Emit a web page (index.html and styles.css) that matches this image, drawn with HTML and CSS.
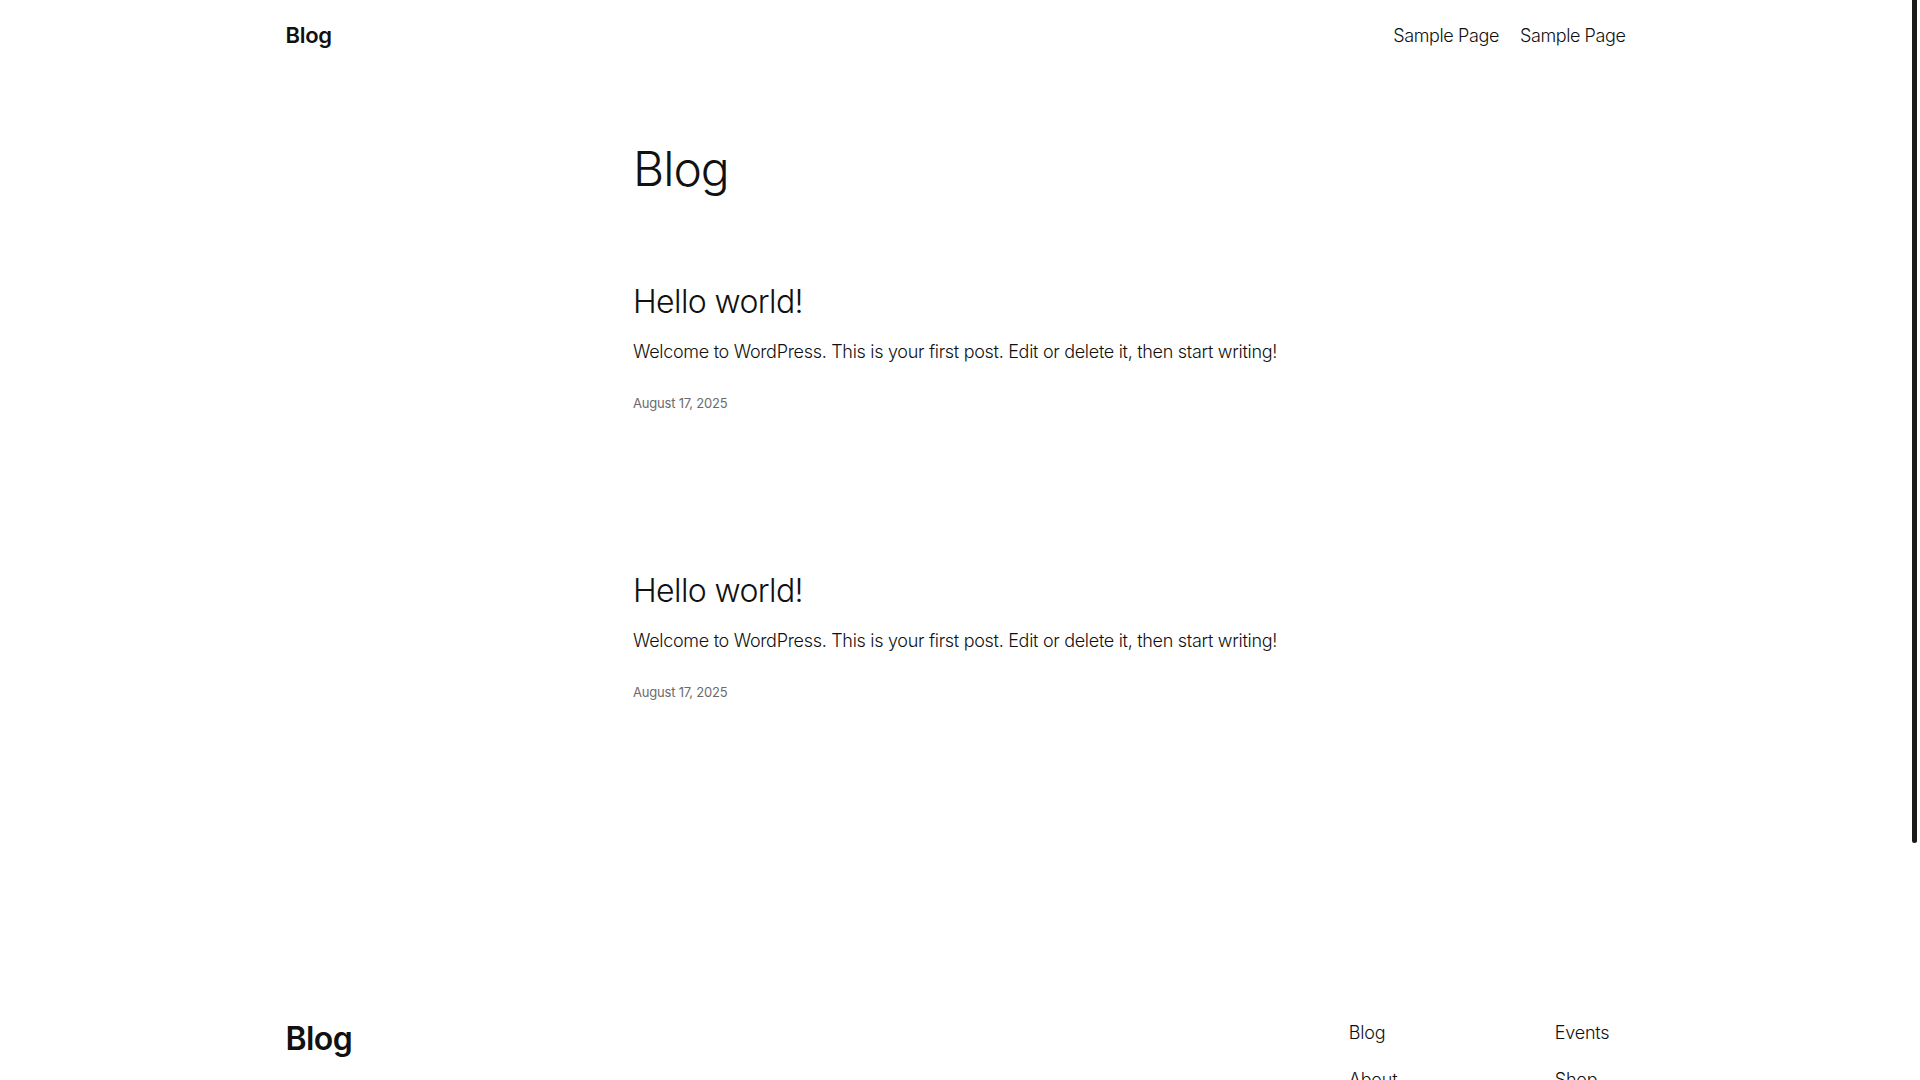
FILE: index.html
```html
<!DOCTYPE html>
<html lang="en">
<head>
<meta charset="utf-8">
<title>Blog</title>
<link rel="stylesheet" href="styles.css">
</head>
<body>
<div class="scroll-thumb"></div>
<header class="site-header">
  <div class="wrap header-row">
    <a class="site-title" href="#">Blog</a>
    <nav class="header-nav">
      <a href="#">Sample Page</a>
      <a href="#">Sample Page</a>
    </nav>
  </div>
</header>
<main class="site-main">
  <div class="content">
    <h1 class="page-title">Blog</h1>
    <ul class="post-list">
      <li class="post">
        <h2 class="post-title"><a href="#">Hello world!</a></h2>
        <p class="post-excerpt">Welcome to WordPress. This is your first post. Edit or delete it, then start writing!</p>
        <time class="post-date">August 17, 2025</time>
      </li>
      <li class="post">
        <h2 class="post-title"><a href="#">Hello world!</a></h2>
        <p class="post-excerpt">Welcome to WordPress. This is your first post. Edit or delete it, then start writing!</p>
        <time class="post-date">August 17, 2025</time>
      </li>
    </ul>
  </div>
</main>
<footer class="site-footer">
  <div class="wrap footer-row">
    <a class="footer-title" href="#">Blog</a>
    <div class="footer-navs">
      <nav class="footer-nav">
        <a href="#">Blog</a>
        <a href="#">About</a>
        <a href="#">FAQs</a>
        <a href="#">Authors</a>
      </nav>
      <nav class="footer-nav">
        <a href="#">Events</a>
        <a href="#">Shop</a>
        <a href="#">Patterns</a>
        <a href="#">Themes</a>
      </nav>
    </div>
  </div>
  <div class="wrap footer-bottom">
    <span>Twenty Twenty-Five</span>
    <span>Designed with WordPress</span>
  </div>
</footer>
</body>
</html>
```
FILE: styles.css
```css
html {
  scrollbar-width: none;
}
html::-webkit-scrollbar {
  display: none;
}
body {
  margin: 0;
  padding-right: 9px;
  background: #ffffff;
  color: #111111;
  font-family: Inter, "Noto Sans", "Liberation Sans", sans-serif;
  font-size: 18px;
  letter-spacing: -0.2px;
}
a {
  color: inherit;
  text-decoration: none;
}
.wrap {
  max-width: 1340px;
  margin: 0 auto;
}
.scroll-thumb {
  position: fixed;
  top: 0;
  right: 3px;
  width: 5px;
  height: 843px;
  background: #1a1a1a;
  border-radius: 0 0 3px 3px;
}
.site-header {
  padding: 22px 0 12px;
}
.header-row {
  display: flex;
  justify-content: space-between;
  align-items: center;
}
.site-title {
  font-size: 22px;
  font-weight: 600;
  letter-spacing: -0.3px;
}
.header-nav {
  display: flex;
  gap: 21px;
  font-size: 18px;
  font-weight: 300;
  letter-spacing: -0.4px;
}
.site-main {
  padding-top: 80px;
}
.content {
  width: 645px;
  margin: 0 auto;
}
.page-title {
  margin: 0;
  font-size: 48px;
  font-weight: 300;
  letter-spacing: -1px;
  line-height: 1.2;
}
.post-list {
  list-style: none;
  margin: 83px 0 0;
  padding: 0;
}
.post {
  display: flex;
  flex-direction: column;
  height: 289px;
}
.post-title {
  margin: 0;
  font-size: 32px;
  font-weight: 300;
  letter-spacing: -0.6px;
  line-height: 1.3;
}
.post-excerpt {
  margin: 16px 0 0;
  font-size: 18px;
  font-weight: 300;
  line-height: 1.5;
  letter-spacing: -0.3px;
  white-space: nowrap;
}
.post-date {
  margin-top: 30px;
  font-size: 13px;
  color: #6b6b6b;
  font-weight: 400;
}
.site-footer {
  padding-top: 160px;
  padding-bottom: 60px;
}
.footer-row {
  display: flex;
  justify-content: space-between;
  align-items: flex-start;
}
.footer-title {
  font-size: 32px;
  font-weight: 600;
  letter-spacing: -0.6px;
}
.footer-navs {
  display: grid;
  grid-template-columns: 206px auto;
  padding-top: 3px;
  padding-right: 4px;
}
.footer-nav {
  display: flex;
  flex-direction: column;
  gap: 26px;
  font-size: 18px;
  font-weight: 300;
}
.footer-bottom {
  display: flex;
  justify-content: space-between;
  margin-top: 100px;
  font-size: 14px;
  color: #6b6b6b;
}
```
